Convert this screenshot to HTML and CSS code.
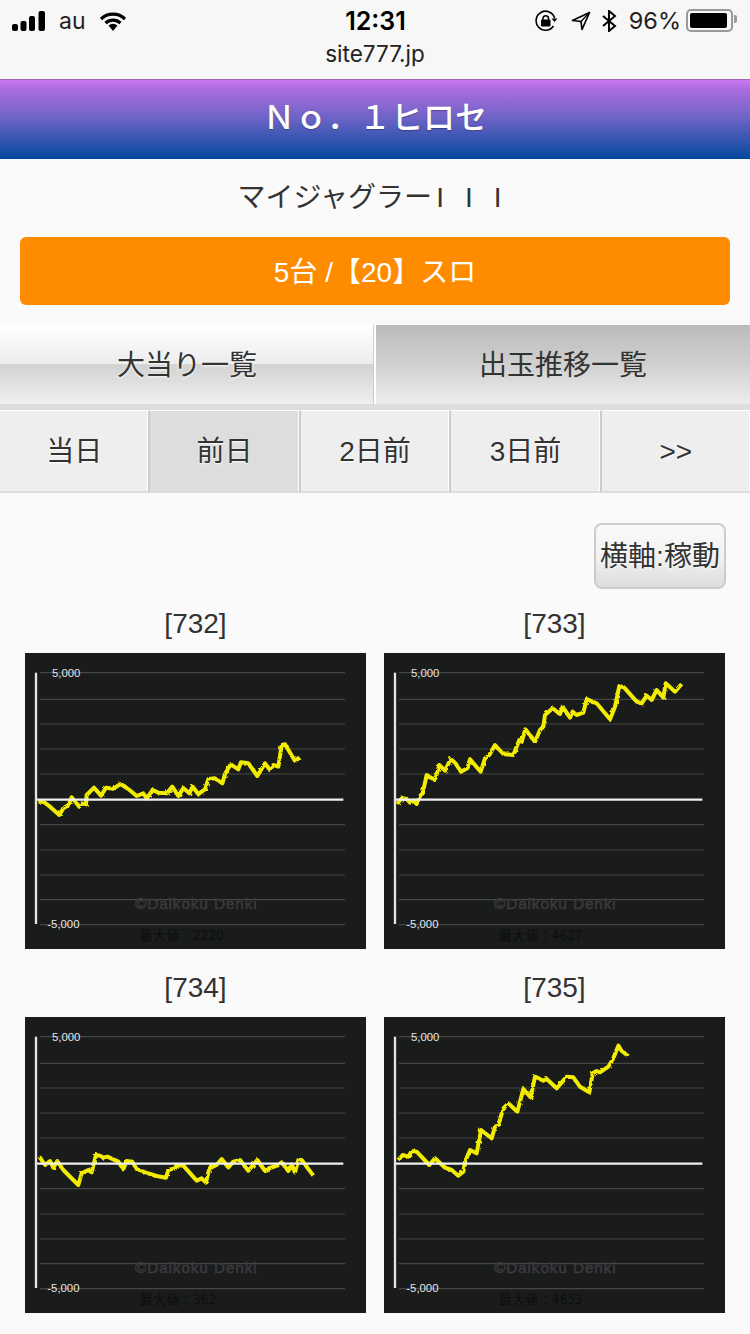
FILE: index.html
```html
<!DOCTYPE html>
<html lang="ja">
<head>
  <meta charset="UTF-8">
  <meta name="viewport" content="width=device-width, initial-scale=1.0">
  <title>マイジャグラーIII</title>
  <link rel="stylesheet" href="styles.css">
</head>
<body>
  <!-- Barra de status -->
  <div class="statusbar">
    <div class="status-row">
      <div class="status-left">
        <svg class="ico-signal" width="34" height="20" viewBox="0 0 34 20">
          <rect x="0" y="13" width="6" height="7" rx="2"/>
          <rect x="8.500" y="10" width="6" height="10" rx="2"/>
          <rect x="17" y="5" width="6" height="15" rx="2"/>
          <rect x="26.500" y="0" width="6.500" height="20" rx="2"/>
        </svg>
        <span class="carrier">au</span>
        <svg class="ico-wifi" width="28" height="20" viewBox="0 0 28 20">
          <path d="M2 8a17 17 0 0 1 24 0M6.500 12a11 11 0 0 1 15 0" fill="none" stroke="#000" stroke-width="3.200"/>
          <path d="M9.500 14.500a7 7 0 0 1 9 0L14 20z"/>
        </svg>
      </div>
      <div class="status-time">12:31</div>
      <div class="status-right">
        <svg width="23" height="22" viewBox="0 0 23 22">
          <path d="M18.500 16A9.500 9.500 0 1 1 19.700 8" fill="none" stroke="#000" stroke-width="1.600"/>
          <path d="M16.500 8.500h6l-3 3.500z"/>
          <rect x="6" y="9.500" width="9.500" height="7" rx="1"/>
          <path d="M8 10V8a2.800 2.800 0 0 1 5.500 0v2" fill="none" stroke="#000" stroke-width="1.500"/>
        </svg>
        <svg class="ico-arrow" width="20" height="20" viewBox="0 0 20 20">
          <path d="M18.500 1.500L1.500 9.500l8.500 1 1 8z" fill="none" stroke="#000" stroke-width="1.700" stroke-linejoin="round"/>
          <path d="M18.500 1.500L10 10.500" stroke="#000" stroke-width="1.200"/>
        </svg>
        <svg class="ico-bt" width="15" height="22" viewBox="0 0 15 22">
          <path d="M1 6l12 10-6 5V1l6 5L1 16" fill="none" stroke="#000" stroke-width="2"/>
        </svg>
        <span class="battery-pct">96%</span>
        <div class="battery"><div class="battery-fill"></div></div>
      </div>
    </div>
    <div class="status-url">site777.jp</div>
  </div>

  <h1 class="title">Ｎｏ．１ヒロセ</h1>
  <div class="machine">マイジャグラー<span class="roman">III</span></div>
  <div class="orange-bar">5台 /【20】スロ</div>

  <div class="tabs">
    <div class="tab">大当り一覧</div>
    <div class="tab tab-active">出玉推移一覧</div>
  </div>

  <div class="days">
    <div class="day">当日</div>
    <div class="day day-active">前日</div>
    <div class="day">2日前</div>
    <div class="day">3日前</div>
    <div class="day">&gt;&gt;</div>
  </div>

  <div class="toolbar">
    <div class="axis-btn">横軸:稼動</div>
  </div>

  <div class="charts">
    <div class="chart-box">
      <div class="chart-label">[732]</div>
      <svg class="chart" viewBox="0 0 1023 888">
        <defs>
          <!-- deixa a linha serrilhada -->
          <filter id="rough" x="-5%" y="-20%" width="110%" height="140%">
            <feTurbulence type="fractalNoise" baseFrequency="0.09" numOctaves="2" seed="4"/>
            <feDisplacementMap in="SourceGraphic" scale="9"/>
          </filter>
        </defs>
        <g id="chartGrid">
          <path class="grid-line" d="M45 59H960M45 139H960M45 213H960M45 288H960M45 363H960M45 515H960M45 591H960M45 666H960M45 740H960M45 815H960"/>
          <path class="axis-line" d="M33 59V813"/>
        </g>
        <g transform="translate(-15,-9)" filter="url(#rough)">
          <polyline class="data-line" points="55,455 70,455 90,470 118,495 130,475 145,465 155,442 178,470 185,460 198,463 200,435 222,413 243,437 258,413 280,416 302,402 325,417 350,438 370,430 380,445 398,420 415,428 440,430 457,410 475,438 490,414 508,430 518,410 535,432 555,418 565,387 585,385 607,400 615,372 632,343 655,358 663,337 685,340 712,378 735,340 750,360 760,345 775,350 785,285 795,283 825,333 838,322"/>
        </g>
        <path class="zero-line" d="M36 440H955"/>
        <text class="chart-num" x="81" y="71">5,000</text>
        <text class="chart-num" x="67" y="824">-5,000</text>
        <text class="chart-mark" x="330" y="769" textLength="365">©Daikoku Denki</text>
        <text class="chart-max" x="345" y="861">最大値：2220</text>
      </svg>
    </div>
    <div class="chart-box">
      <div class="chart-label">[733]</div>
      <svg class="chart" viewBox="0 0 1023 888">
        <use href="#chartGrid"/>
        <g transform="translate(-12,-9)" filter="url(#rough)">
          <polyline class="data-line" points="52,462 60,450 68,445 80,447 90,458 100,452 110,462 120,438 128,430 140,375 165,390 178,345 195,362 212,327 225,338 243,365 262,355 270,328 302,365 315,325 328,315 345,285 370,312 400,315 418,270 425,275 436,238 465,275 480,240 490,230 495,195 518,175 540,192 548,170 570,203 578,185 590,195 610,188 620,147 650,160 690,208 705,170 718,108 732,112 770,155 785,160 800,137 815,150 830,120 850,143 857,100 885,125 905,102"/>
        </g>
        <path class="zero-line" d="M36 440H955"/>
        <text class="chart-num" x="81" y="71">5,000</text>
        <text class="chart-num" x="67" y="824">-5,000</text>
        <text class="chart-mark" x="330" y="769" textLength="365">©Daikoku Denki</text>
        <text class="chart-max" x="345" y="861">最大値：4627</text>
      </svg>
    </div>
    <div class="chart-box">
      <div class="chart-label">[734]</div>
      <svg class="chart" viewBox="0 0 1023 888">
        <use href="#chartGrid"/>
        <g transform="translate(-15,-6)" filter="url(#rough)">
          <polyline class="data-line" points="58,425 75,450 90,438 100,458 112,438 130,465 175,510 185,475 205,465 215,472 228,420 240,422 250,428 262,425 295,440 310,463 320,438 337,440 350,462 375,472 410,483 438,488 445,465 465,460 470,450 490,452 530,497 545,490 558,503 568,460 590,450 605,432 625,457 640,440 660,435 685,467 712,435 733,465 775,450 785,442 805,468 815,450 825,472 835,435 845,435 880,482"/>
        </g>
        <path class="zero-line" d="M36 440H955"/>
        <text class="chart-num" x="81" y="71">5,000</text>
        <text class="chart-num" x="67" y="824">-5,000</text>
        <text class="chart-mark" x="330" y="769" textLength="365">©Daikoku Denki</text>
        <text class="chart-max" x="345" y="861">最大値：362</text>
      </svg>
    </div>
    <div class="chart-box">
      <div class="chart-label">[735]</div>
      <svg class="chart" viewBox="0 0 1023 888">
        <use href="#chartGrid"/>
        <g transform="translate(-12,-6)" filter="url(#rough)">
          <polyline class="data-line" points="55,435 68,420 85,425 95,408 110,410 148,450 165,430 195,458 215,465 235,482 250,470 255,440 270,405 290,415 303,345 335,370 345,335 355,330 370,280 385,265 412,290 430,222 452,247 465,185 490,197 500,192 530,220 560,185 580,187 600,215 628,232 638,175 650,168 660,172 685,155 700,130 715,92 725,108 745,123"/>
        </g>
        <path class="zero-line" d="M36 440H955"/>
        <text class="chart-num" x="81" y="71">5,000</text>
        <text class="chart-num" x="67" y="824">-5,000</text>
        <text class="chart-mark" x="330" y="769" textLength="365">©Daikoku Denki</text>
        <text class="chart-max" x="345" y="861">最大値：4653</text>
      </svg>
    </div>
  </div>
</body>
</html>
```

FILE: styles.css
```css
html, body {
  margin: 0;
  padding: 0;
}

body {
  width: 750px;
  height: 1334px;
  overflow: hidden;
  background-color: #fafafa;
  color: #333;
  font-family: "Liberation Sans", "Noto Sans CJK JP", sans-serif;
}

/* Barra de status */
.statusbar {
  height: 79px;
  background-color: #f7f7f7;
  font-family: Inter, "Noto Sans", sans-serif;
  color: #000;
}

.status-row {
  display: grid;
  grid-template-columns: 1fr auto 1fr;
  align-items: center;
  height: 41px;
  padding: 0 11px 0 12px;
}

.status-left {
  display: flex;
  align-items: center;
}

.carrier {
  font-size: 23px;
  margin-left: 13px;
  color: #222;
}

.ico-wifi {
  margin-left: 13px;
}

.status-time {
  font-size: 25px;
  font-weight: 600;
}

.status-right {
  display: flex;
  align-items: center;
  justify-content: flex-end;
}

.ico-arrow {
  margin-left: 13px;
}

.ico-bt {
  margin-left: 11px;
}

.battery-pct {
  font-size: 23.500px;
  margin-left: 12px;
  color: #222;
}

.battery {
  position: relative;
  box-sizing: border-box;
  width: 47px;
  height: 23px;
  margin-left: 5px;
  margin-right: 6px;
  padding: 2px;
  border: 2px solid #999;
  border-radius: 5px;
}

.battery::after {
  content: '';
  position: absolute;
  top: 4px;
  right: -6px;
  width: 3px;
  height: 8px;
  background-color: #999;
  border-radius: 0 2px 2px 0;
}

.battery-fill {
  height: 100%;
  width: 96%;
  background-color: #000;
  border-radius: 2px;
}

.status-url {
  text-align: center;
  font-size: 22.500px;
  line-height: 26px;
  color: #222;
}

/* Cabecalho */
.title {
  margin: 0;
  height: 80px;
  line-height: 76px;
  box-sizing: border-box;
  border-top: 1px solid #a264b8;
  background: linear-gradient(#c878f0, #b06ee0 10%, #6a62c4 50%, #02499e);
  color: #fff;
  font-size: 32px;
  font-weight: 500;
  text-align: center;
  text-shadow: 0 1px 1px rgba(0, 0, 0, 0.3);
}

.machine {
  text-align: center;
  font-size: 28px;
  height: 78px;
  line-height: 78px;
}

.roman {
  margin-left: 4px;
  letter-spacing: 21px;
  margin-right: -10px;
}

.orange-bar {
  height: 68px;
  line-height: 71px;
  margin: 0 20px 20px;
  background-color: #ff8c00;
  border-radius: 6px;
  color: #fff;
  font-size: 28px;
  text-align: center;
}

/* Abas */
.tabs {
  display: flex;
  height: 85px;
  padding-bottom: 6px;
  box-sizing: border-box;
  background: linear-gradient(transparent 93%, #ddd 93%);
}

.tab {
  flex: 1;
  height: 79px;
  line-height: 81px;
  font-size: 28px;
  text-align: center;
  text-shadow: 0 1px 3px #fff;
  background: linear-gradient(#fff, #ececec 49%, #d2d2d2 50%, #efefef 100%);
  border-right: 2px solid #fff;
  box-shadow: inset -1px 0 0 #ccc;
}

.tab-active {
  background: linear-gradient(#bbb, #d0d0d0 50%, #eaeaea 95%);
  border-right: none;
  box-shadow: none;
  text-shadow: none;
}

.days {
  display: flex;
  height: 83px;
  box-sizing: border-box;
  background-color: #fafafa;
}

.day {
  flex: 1;
  box-sizing: border-box;
  border-top: 1px solid #fff;
  border-bottom: 2px solid #ddd;
  border-right: 2px solid #ccc;
  box-shadow: inset -1px 0 0 #fff;
  background-color: #eee;
  font-size: 28px;
  line-height: 82px;
  text-align: center;
  text-shadow: 0 1px 2px #fff;
}

.day:last-child {
  border-right: none;
}

.day-active {
  background-color: #ddd;
}

.toolbar {
  display: flex;
  justify-content: flex-end;
  padding: 30px 24px 0 0;
}

.axis-btn {
  box-sizing: border-box;
  width: 132px;
  height: 66px;
  line-height: 64px;
  border: 2px solid #ccc;
  border-radius: 8px;
  background: linear-gradient(#fafafa, #f2f2f2 50%, #dcdcdc);
  font-size: 28px;
  text-align: center;
  white-space: nowrap;
  text-shadow: 0 1px 2px #fff;
}

/* Graficos */
.charts {
  display: grid;
  grid-template-columns: 341px 341px;
  column-gap: 18px;
  row-gap: 24px;
  padding: 20px 25px 0;
}

.chart-label {
  font-size: 28px;
  line-height: 30px;
  text-align: center;
  margin-bottom: 14px;
}

.chart {
  display: block;
  width: 341px;
  height: 296px;
  background-color: #191c1a;
}

.grid-line {
  stroke: #464646;
  stroke-width: 3.500;
  fill: none;
}

.axis-line {
  stroke: #e4e4e4;
  stroke-width: 7;
  fill: none;
}

.zero-line {
  stroke: #efefef;
  stroke-width: 7;
  fill: none;
}

.data-line {
  fill: none;
  stroke: #f2ec00;
  stroke-width: 12;
  stroke-linejoin: round;
}

.chart-num {
  fill: #e6e6e6;
  font-size: 34px;
  font-family: "Liberation Sans", sans-serif;
}

.chart-mark {
  fill: #3b3a40;
  stroke: #3b3a40;
  stroke-width: 1.500;
  font-size: 46px;
  font-family: "Liberation Sans", sans-serif;
}

.chart-max {
  fill: #0d0e0d;
  font-size: 38px;
  letter-spacing: 2px;
  font-family: "Noto Sans CJK JP", sans-serif;
}
```
